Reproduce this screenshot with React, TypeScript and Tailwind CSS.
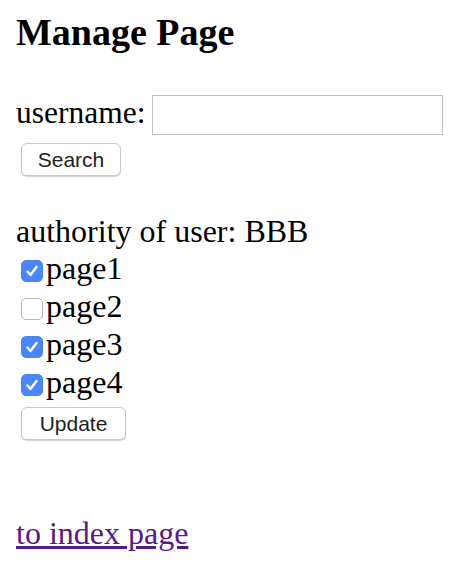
import React, { useState } from "react";

const initialPages = [
  { name: "page1", checked: true },
  { name: "page2", checked: false },
  { name: "page3", checked: true },
  { name: "page4", checked: true },
];

function Button({ label, width }: { label: string; width: string }) {
  return (
    <button
      type="button"
      className={`ml-[5px] flex h-[33px] ${width} items-center justify-center rounded-[6px] border border-[#c8c8c8] bg-white font-['Liberation_Sans',Arial,sans-serif] text-[21px] text-[#1e1e1e] shadow-[0_1px_1px_rgba(0,0,0,0.18)]`}
    >
      {label}
    </button>
  );
}

export default function App() {
  const [username, setUsername] = useState("");
  const [pages, setPages] = useState(initialPages);

  const toggle = (name: string) => {
    setPages((prev) => prev.map((p) => (p.name === name ? { ...p, checked: !p.checked } : p)));
  };

  return (
    <div className="min-h-screen bg-white px-4 font-['Liberation_Serif','Times_New_Roman',serif] text-black">
      <h1 className="pt-[11px] text-[38px] font-bold leading-[42px]">Manage Page</h1>

      <div className="mt-[42px] flex items-start">
        <span className="text-[31.5px] leading-[36px]">username:</span>
        <input
          type="text"
          value={username}
          onChange={(e) => setUsername(e.target.value)}
          className="ml-[7px] h-[40px] w-[291px] border border-[#bfbfbf] bg-white px-2 text-[20px] outline-none"
        />
      </div>
      <div className="mt-[8px]">
        <Button label="Search" width="w-[100px]" />
      </div>

      <p className="mt-[37px] text-[32px] leading-[36px]">authority of user: BBB</p>
      <div className="flex flex-col">
        {pages.map((p) => (
          <label key={p.name} className="flex h-[38px] items-start text-[32px] leading-[38px]">
            <span className="relative ml-[5px] mt-[11px] h-[22px] w-[22px]">
              <input
                type="checkbox"
                checked={p.checked}
                onChange={() => toggle(p.name)}
                className="block h-[22px] w-[22px] appearance-none rounded-[5px] border border-[#b5b5b5] bg-white checked:border-[#4a86f7] checked:bg-[#4a86f7]"
              />
              {p.checked && (
                <svg
                  viewBox="0 0 22 22"
                  className="pointer-events-none absolute left-0 top-0 h-[22px] w-[22px]"
                  fill="none"
                  stroke="white"
                  strokeWidth="2.4"
                  strokeLinecap="round"
                  strokeLinejoin="round"
                >
                  <path d="M6.5 11.5 L9.5 15 L15.5 7" />
                </svg>
              )}
            </span>
            <span className="ml-[3px]">{p.name}</span>
          </label>
        ))}
      </div>
      <div className="mt-[6px]">
        <Button label="Update" width="w-[105px]" />
      </div>

      <p className="mt-[75px] text-[32px] leading-[36px]">
        <a href="/" className="text-[#551a8b] underline">
          to index page
        </a>
      </p>
    </div>
  );
}
